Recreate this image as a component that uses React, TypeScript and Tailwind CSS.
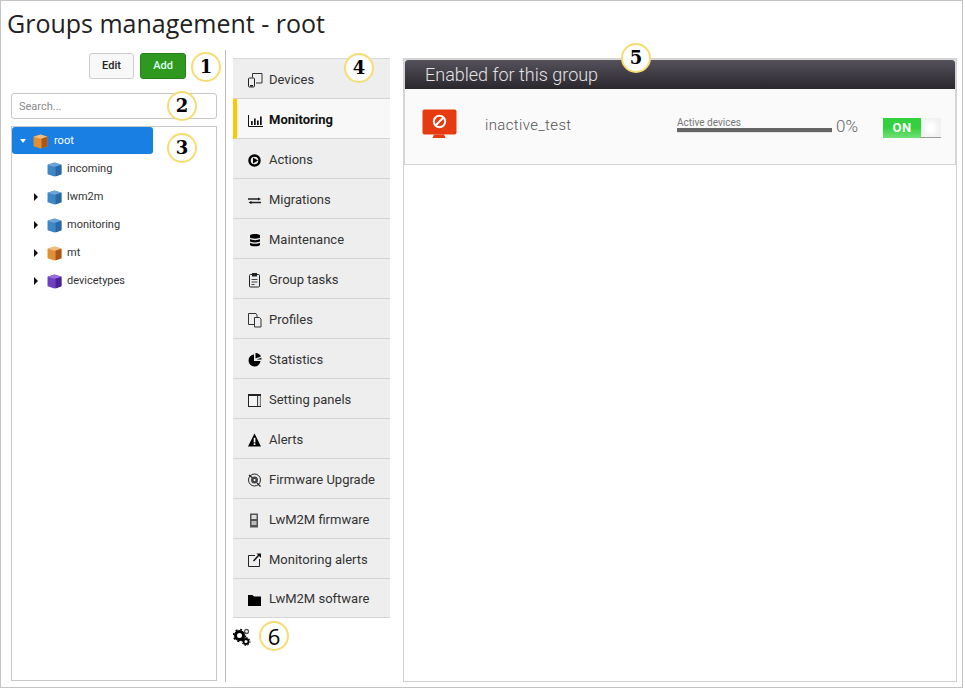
import React from "react";

const Cube = ({ c1, c2, c3 }: { c1: string; c2: string; c3: string }) => (
  <svg width="15" height="15" viewBox="0 0 14 14" className="shrink-0">
    <path d="M7 0.5 13.500 2.500v9L7 13.500 0.500 11.500v-9z" fill={c2} />
    <path d="M7 0.500 13.500 2.500 7 4.500 0.500 2.500z" fill={c1} />
    <path d="M8 4.500 13.500 2.500v9L8 13.500z" fill={c3} />
  </svg>
);
const orange = { c1: "#eebd80", c2: "#e08f35", c3: "#a8561a" };
const blue = { c1: "#6ba6d8", c2: "#3f86c4", c3: "#2a68a3" };
const purple = { c1: "#9a6fe0", c2: "#6f3fc4", c3: "#4a2296" };

const Badge = ({ n, cls, serif = true }: { n: string; cls: string; serif?: boolean }) => (
  <div
    className={`absolute w-[30px] h-[30px] rounded-full bg-white border-2 border-[#f7dc6f] flex items-center justify-center leading-none text-black ${
      serif ? "font-['DejaVu_Serif',serif] font-bold text-[18px]" : "font-['Open_Sans',sans-serif] text-[22px]"
    } ${cls}`}
  >
    {n}
  </div>
);

const S = ({ children }: { children: React.ReactNode }) => (
  <svg width="16" height="16" viewBox="0 0 16 16" className="shrink-0">
    {children}
  </svg>
);

const icons: Record<string, React.ReactNode> = {
  Devices: (
    <S>
      <path d="M5.500 5.500V1.500h9.500v9.500H9" fill="none" stroke="#333" strokeWidth="1" />
      <rect x="1.500" y="6" width="6" height="9" rx="1" fill="#eee" stroke="#222" />
      <rect x="3" y="13" width="3" height="1.500" fill="#222" />
    </S>
  ),
  Monitoring: (
    <S>
      <path d="M1.500 3v11.500H16" fill="none" stroke="#111" strokeWidth="1" />
      <path d="M4 9h1.700v4H4zM7 6.500h1.700V13H7zM10 8.500h1.700V13H10zM13 4.500h1.700V13H13z" fill="#111" />
    </S>
  ),
  Actions: (
    <S>
      <circle cx="7.500" cy="8.500" r="5" fill="#eee" stroke="#000" strokeWidth="2.500" />
      <path d="M6 5.500 11 8.500l-5 3z" fill="#000" />
    </S>
  ),
  Migrations: (
    <S>
      <path d="M1 7h11M14 10.500H3" stroke="#222" strokeWidth="1.300" />
      <path d="M11 5.500 14 7l-3 1.500zM4.500 9 1.500 10.500 4.500 12z" fill="#111" />
    </S>
  ),
  Maintenance: (
    <S>
      <path d="M3 3.500C3 1.500 13 1.500 13 3.500V5.500C13 7 3 7 3 5.500zM3 7c2 1.500 8 1.500 10 0v2.300c0 1.500-10 1.500-10 0zM3 10.700c2 1.500 8 1.500 10 0v2c0 2-10 2-10 0z" fill="#000" />
    </S>
  ),
  "Group tasks": (
    <S>
      <rect x="2.500" y="2.500" width="10" height="12.500" rx="1" fill="#eee" stroke="#222" />
      <path d="M5 1h5v3.500H5z" fill="#222" />
      <path d="M4.500 7.500h6M4.500 10h6M4.500 12.500h3" stroke="#444" />
    </S>
  ),
  Profiles: (
    <S>
      <path d="M1.500 1.500h7.500l1 1.500v9.500H1.500z" fill="#eee" stroke="#333" />
      <path d="M7.500 5.500h5l1.500 1.500v8H7.500z" fill="#eee" stroke="#333" />
    </S>
  ),
  Statistics: (
    <S>
      <path d="M7 2.500A6 6 0 1 0 13.500 9H7z" fill="#000" />
      <path d="M8.500 1a6 6 0 0 1 5.500 3.500L8.500 6.500z" fill="#000" />
      <path d="M9.500 7.500l4.800-1.800a6 6 0 0 1 .2 1.800z" fill="#000" />
    </S>
  ),
  "Setting panels": (
    <S>
      <rect x="1.500" y="2.500" width="12" height="12" fill="#f4f4f4" stroke="#222" />
      <rect x="1" y="2" width="13" height="2" fill="#222" />
      <rect x="10.500" y="4" width="3" height="10" fill="#ddd" />
      <rect x="10" y="4" width="1" height="10" fill="#444" />
    </S>
  ),
  Alerts: (
    <S>
      <path d="M7.500 1.500 14 14.500H1z" fill="#000" />
      <rect x="6.700" y="5.800" width="1.700" height="4.700" fill="#fff" />
      <rect x="6.700" y="11.300" width="1.700" height="1.700" fill="#fff" />
    </S>
  ),
  "Firmware Upgrade": (
    <S>
      <circle cx="7.500" cy="8" r="6" fill="#eee" stroke="#222" />
      <circle cx="7.500" cy="8" r="3.500" fill="#444" />
      <circle cx="7.500" cy="8" r="1" fill="#fff" />
      <path d="M10 11l3.500 3.500M2 3l3 2.500" stroke="#222" strokeWidth="1.300" />
    </S>
  ),
  "LwM2M firmware": (
    <S>
      <rect x="3" y="1.500" width="8" height="14" fill="#555" />
      <rect x="4.500" y="3" width="5" height="4" fill="#ddd" />
      <rect x="4.500" y="9" width="5" height="4" fill="#bbb" />
    </S>
  ),
  "Monitoring alerts": (
    <S>
      <path d="M8 3.500H1.500v11h11V7" fill="#eee" stroke="#222" />
      <path d="M6.500 9 12 3" stroke="#111" strokeWidth="1.500" />
      <path d="M9.500 1.500h4.500v4.500z" fill="#111" />
    </S>
  ),
  "LwM2M software": (
    <S>
      <path d="M1 4h4.500l1.500 1.500h7v9.500H1z" fill="#000" />
    </S>
  ),
};

const nav = [
  "Devices",
  "Monitoring",
  "Actions",
  "Migrations",
  "Maintenance",
  "Group tasks",
  "Profiles",
  "Statistics",
  "Setting panels",
  "Alerts",
  "Firmware Upgrade",
  "LwM2M firmware",
  "Monitoring alerts",
  "LwM2M software",
];

const tree = [
  { t: "incoming", arrow: false, c: blue },
  { t: "lwm2m", arrow: true, c: blue },
  { t: "monitoring", arrow: true, c: blue },
  { t: "mt", arrow: true, c: orange },
  { t: "devicetypes", arrow: true, c: purple },
];

export default function App() {
  return (
    <div className="relative w-[963px] h-[688px] bg-white border border-[#c4c4c4] font-['Roboto',sans-serif] overflow-hidden">
      <h1 className="font-['Open_Sans',sans-serif] text-[25px] leading-[32px] text-[#222] pl-[6px] pt-[6px] h-[49px]">
        Groups management - root
      </h1>
      <div className="flex h-[632px]">
        <div className="w-[225px] shrink-0 border-r border-[#bdbdbd] pl-[10px] pr-[8px] flex flex-col">
          <div className="flex justify-end gap-[6px] pr-[31px] pt-[3px]">
            <button className="w-[45px] h-[26px] rounded-[3px] border border-[#ccc] bg-[#f8f8f8] text-[11px] font-medium text-[#222]">
              Edit
            </button>
            <button className="w-[46px] h-[26px] rounded-[3px] border border-[#27801c] bg-[#2f981f] text-[11px] font-medium text-[#dfe]">
              Add
            </button>
          </div>
          <input
            placeholder="Search..."
            className="mt-[14px] h-[26px] w-[206px] shrink-0 rounded-[3px] border border-[#c8c8c8] px-[7px] text-[11px] placeholder:text-[#8a8a8a] outline-none"
          />
          <div className="mt-[7px] w-[206px] h-[555px] border border-[#c8c8c8]">
            <div className="w-[141px] h-[27px] rounded-[3px] bg-[#1a7fe3] flex items-center text-white text-[11px] pl-[8px] pt-px">
              <span className="w-0 h-0 border-x-[3.500px] border-x-transparent border-t-[4px] border-t-white" />
              <span className="ml-[7px] mr-[6px]">
                <Cube {...orange} />
              </span>
              root
            </div>
            {tree.map((r) => (
              <div key={r.t} className="h-[28px] flex items-center text-[11px] text-[#333] pl-[22px] pt-[2px]">
                <span className="w-[13px] flex">
                  {r.arrow && (
                    <span className="w-0 h-0 border-y-[4px] border-y-transparent border-l-[4px] border-l-[#111]" />
                  )}
                </span>
                <span className="mr-[5px]">
                  <Cube {...r.c} />
                </span>
                {r.t}
              </div>
            ))}
          </div>
        </div>
        <div className="ml-[7px] w-[157px] shrink-0 flex flex-col pt-[8px]">
          <div className="border-t border-[#d8d8d8]" />
          {nav.map((n) => {
            const active = n === "Monitoring";
            return (
              <div
                key={n}
                className={`${n === "LwM2M software" ? "h-[39px]" : "h-[40px]"} flex items-center border-b border-[#d4d4d4] text-[13px] pt-[2px] ${
                  active
                    ? "bg-[#f8f8f8] border-l-[4px] border-l-[#ffc800] font-bold text-[#111] pl-[10px]"
                    : "bg-[#eeeeee] text-[#333] pl-[14px]"
                }`}
              >
                {icons[n]}
                <span className="ml-[6px]">{n}</span>
              </div>
            );
          })}
          <svg width="18" height="18" viewBox="0 0 18 18" className="mt-[10px]">
            <g fill="none" stroke="#000">
              <circle cx="6.500" cy="7.500" r="4" strokeWidth="3" />
              <circle cx="6.500" cy="7.500" r="6" strokeWidth="1.500" strokeDasharray="2 2.700" />
              <circle cx="13" cy="13.500" r="2.500" strokeWidth="1.800" />
              <circle cx="13" cy="13.500" r="4" strokeWidth="1" strokeDasharray="1.500 1.600" />
              <circle cx="13.500" cy="3.500" r="2" strokeWidth="1.300" stroke="#555" />
            </g>
          </svg>
        </div>
        <div className="ml-[13px] mt-[8px] w-[554px] h-[624px] border border-[#d0d0d0] flex flex-col">
          <div className="border-[2px] border-[#d4d4d4] border-b-0 -m-px">
            <div className="h-[29px] bg-gradient-to-b from-[#55525c] to-[#2a272d] rounded-t-[3px] pl-[20px] text-[18px] font-light leading-[30px] text-[#e4e4e4]">
              Enabled for this group
            </div>
            <div className="h-[76px] bg-[#fafafa] border-b border-[#d4d4d4] flex items-start relative">
              <svg width="36" height="32" viewBox="0 0 36 32" className="ml-[17px] mt-[20px] shrink-0">
                <rect x="0.500" y="0.500" width="34" height="25" rx="2" fill="#e63a10" />
                <path d="M12 25.500h10l1.500 3.500h-13z" fill="#e63a10" />
                <circle cx="17.500" cy="12.500" r="5.700" fill="none" stroke="#fff" strokeWidth="2" />
                <path d="M13.500 16.500l8-8" stroke="#fff" strokeWidth="2" />
              </svg>
              <div className="ml-[27px] mt-[26px] w-[192px] text-[15px] tracking-[0.35px] text-[#555] leading-[20px] font-light">
                inactive_test
              </div>
              <div className="mt-[28px] w-[155px]">
                <div className="text-[10px] leading-[11px] text-[#777]">Active devices</div>
                <div className="h-[5px] bg-[#e4e4e4]">
                  <div className="h-[4px] bg-[#666]" />
                </div>
              </div>
              <div className="ml-[4px] mt-[27px] text-[17px] leading-[20px] text-[#666] font-light">0%</div>
              <div className="ml-[25px] mt-[29px] w-[58px] h-[20px] flex">
                <div className="w-[38px] bg-gradient-to-b from-[#34d13f] via-[#34d13f] to-[#6fe075] text-white font-bold text-[13px] leading-[20px] text-center tracking-[0.5px]">
                  ON
                </div>
                <div className="w-[20px] bg-[#f2f2f2] border-b border-[#999] flex items-center justify-center">
                  <div className="w-[10px] h-[12px] bg-white blur-[2px]" />
                </div>
              </div>
            </div>
          </div>
        </div>
      </div>
      <Badge n="1" cls="left-[190px] top-[51px]" />
      <Badge n="2" cls="left-[166px] top-[90px]" />
      <Badge n="3" cls="left-[166px] top-[132px]" />
      <Badge n="4" cls="left-[343px] top-[52px]" />
      <Badge n="5" cls="left-[620px] top-[42px]" />
      <Badge n="6" cls="left-[258px] top-[620px]" serif={false} />
    </div>
  );
}
